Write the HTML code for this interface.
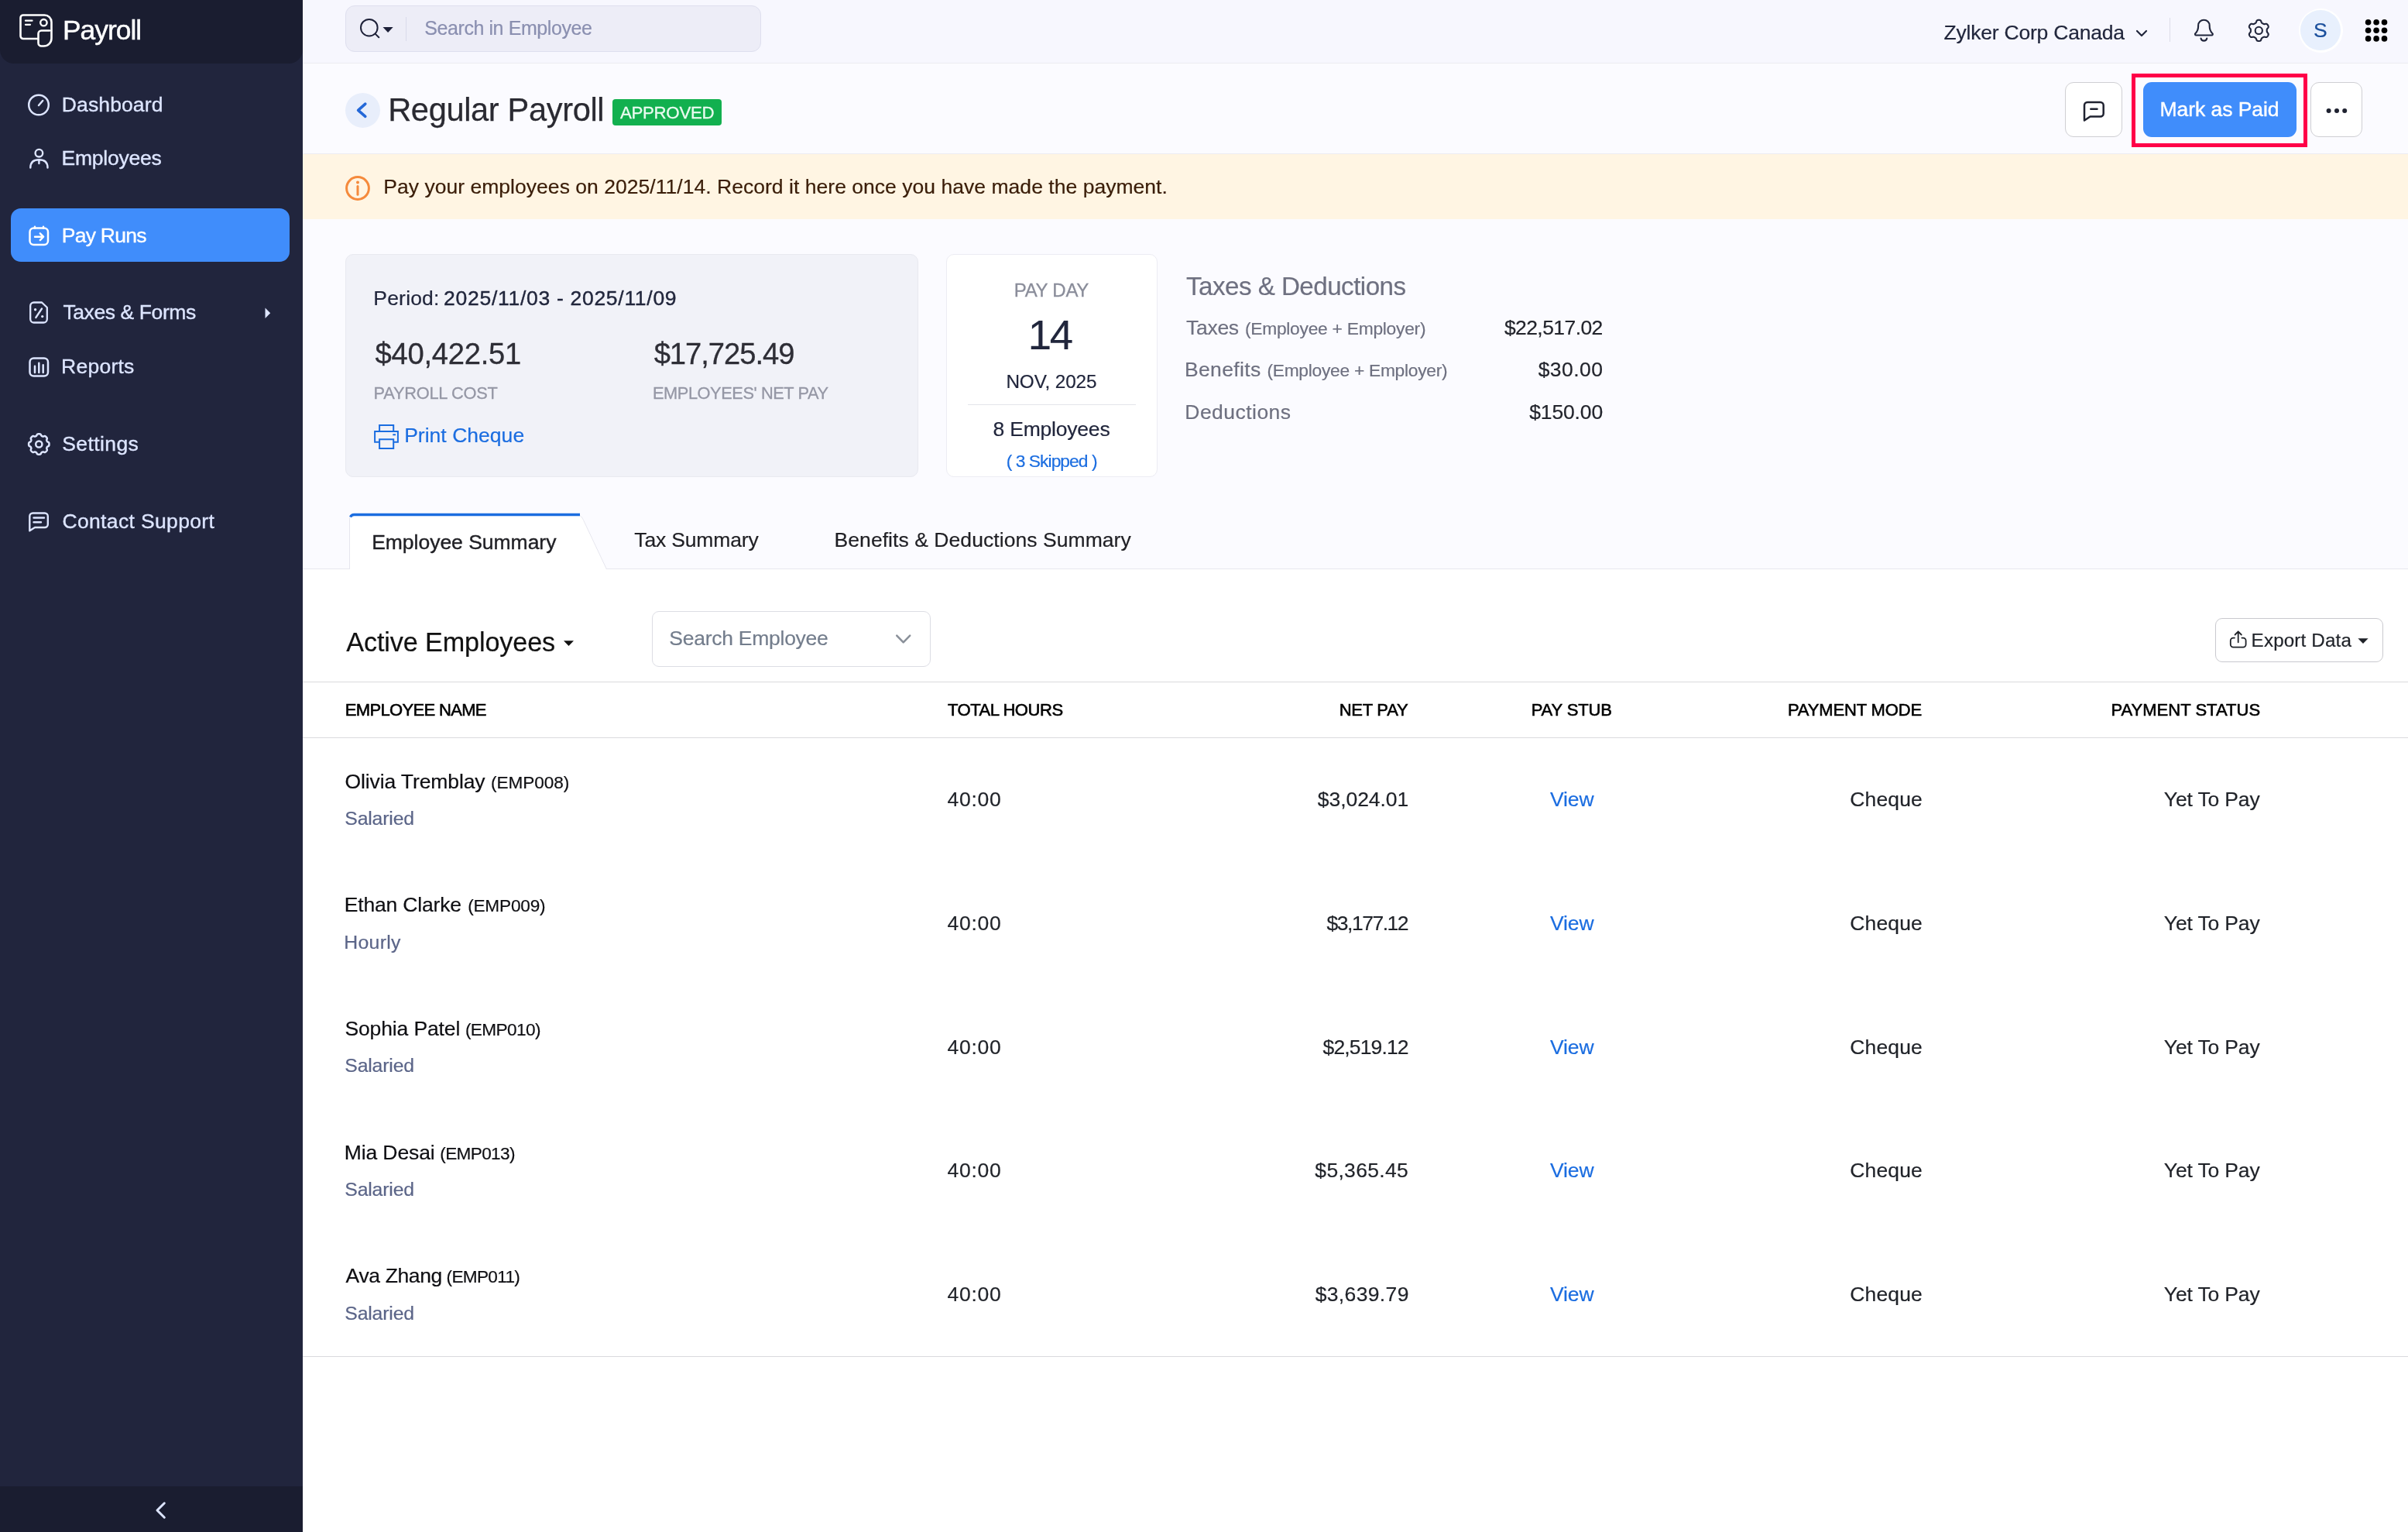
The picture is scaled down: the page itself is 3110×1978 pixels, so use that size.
<!DOCTYPE html>
<html lang="en"><head><meta charset="utf-8"><title>Regular Payroll</title>
<style>
*{box-sizing:border-box;margin:0;padding:0}
html,body{width:3110px;height:1978px;overflow:hidden;background:#fff;font-family:"Liberation Sans", sans-serif;}
.a{position:absolute}
.g{position:absolute;left:0;top:0;width:0;height:0}
.x{position:absolute;left:0;top:0;width:3110px;height:1978px;will-change:transform;pointer-events:none}
.t{position:absolute;line-height:1;white-space:pre;font-weight:400;text-decoration:none}
svg{position:absolute;left:0;top:0;overflow:visible}
@media (max-width:1600px){html{zoom:.5}}
</style></head>
<body>
<aside class="g">
<div class="a" style="left:0px;top:0px;width:391px;height:1978px;background:#21253d"></div>
<div class="a" style="left:0px;top:0px;width:391px;height:82px;background:#1a1d30;border-radius:0 0 18px 18px"></div>
<div class="a" style="left:0px;top:1919px;width:391px;height:59px;background:#1a1d30"></div>
<div class="a" style="left:14px;top:269px;width:360px;height:69px;background:#408dfb;border-radius:13px"></div>
<svg width="3110" height="1978" viewBox="0 0 3110 1978">
<path d="M49.5 50 H30 a3.5 3.5 0 0 1 -3.5 -3.5 V23 a3.5 3.5 0 0 1 3.5 -3.5 H57.5 a9 9 0 0 1 9 9 V49.5 a10 10 0 0 1 -10 10 H53.5 a4 4 0 0 1 -4 -4 V43.5 a4 4 0 0 1 4 -4 H64" fill="none" stroke="#fff" stroke-width="2.6" stroke-linecap="round" stroke-linejoin="round" />
<circle cx="56.4" cy="29.2" r="4.2" fill="none" stroke="#fff" stroke-width="2.4"/>
<path d="M33 26.7 H41.5 M33 31.8 H39" fill="none" stroke="#fff" stroke-width="2.3" stroke-linecap="round" stroke-linejoin="round" />
<circle cx="50" cy="135.5" r="12.8" fill="none" stroke="#dde5ff" stroke-width="2.5"/>
<path d="M50 136 L55.2 130" fill="none" stroke="#dde5ff" stroke-width="2.5" stroke-linecap="round" stroke-linejoin="round" />
<circle cx="50.4" cy="197.7" r="4.8" fill="none" stroke="#dde5ff" stroke-width="2.4"/>
<path d="M39.3 216.5 c0 -7 4 -10.2 11.1 -10.2 s11.1 3.2 11.1 10.2 M50.4 206.5 v4.5" fill="none" stroke="#dde5ff" stroke-width="2.4" stroke-linecap="round" stroke-linejoin="round" />
<rect x="38.5" y="294.5" width="23.5" height="21.5" rx="5" fill="none" stroke="#fff" stroke-width="2.5"/>
<path d="M45 292.6 v2 M56 292.6 v2 M45 305.7 H55.5 M51.8 301.3 l4.3 4.4 l-4.3 4.4" fill="none" stroke="#fff" stroke-width="2.4" stroke-linecap="round" stroke-linejoin="round" />
<path d="M43.7 390.5 H54 l6.8 6.5 V412 a4.5 4.5 0 0 1 -4.5 4.5 H43.7 a4.5 4.5 0 0 1 -4.5 -4.5 V395 a4.5 4.5 0 0 1 4.5 -4.5 z M54 398.5 L46.3 410" fill="none" stroke="#dde5ff" stroke-width="2.3" stroke-linecap="round" stroke-linejoin="round" />
<circle cx="45.6" cy="399.8" r="1.7" fill="#dde5ff"/><circle cx="54.7" cy="408.6" r="1.7" fill="#dde5ff"/>
<path d="M342.5 397.5 L349.2 404.2 L342.5 411 Z" fill="#dde5ff"/>
<rect x="38.5" y="462.5" width="23.5" height="23" rx="5" fill="none" stroke="#dde5ff" stroke-width="2.5"/>
<path d="M45 472.8 V481 M50.3 468.8 V481 M55.7 471.2 V481" fill="none" stroke="#dde5ff" stroke-width="2.5" stroke-linecap="round" stroke-linejoin="round" />
<path d="M50.30 560.30 L50.65 560.31 L50.99 560.32 L51.33 560.36 L51.68 560.41 L52.01 560.50 L52.33 560.66 L52.63 560.93 L52.88 561.36 L53.09 561.86 L53.30 562.31 L53.52 562.63 L53.76 562.85 L54.02 563.01 L54.28 563.14 L54.54 563.25 L54.81 563.36 L55.09 563.45 L55.38 563.52 L55.71 563.54 L56.09 563.47 L56.55 563.29 L57.06 563.09 L57.54 562.97 L57.94 562.98 L58.28 563.10 L58.58 563.27 L58.86 563.48 L59.13 563.70 L59.39 563.93 L59.63 564.17 L59.87 564.41 L60.10 564.67 L60.32 564.94 L60.53 565.22 L60.70 565.52 L60.82 565.86 L60.83 566.26 L60.71 566.74 L60.51 567.25 L60.33 567.71 L60.26 568.09 L60.28 568.42 L60.35 568.71 L60.44 568.99 L60.55 569.26 L60.66 569.52 L60.79 569.78 L60.95 570.04 L61.17 570.28 L61.49 570.50 L61.94 570.71 L62.44 570.92 L62.87 571.17 L63.14 571.47 L63.30 571.79 L63.39 572.12 L63.44 572.47 L63.48 572.81 L63.49 573.15 L63.50 573.50 L63.49 573.85 L63.48 574.19 L63.44 574.53 L63.39 574.88 L63.30 575.21 L63.14 575.53 L62.87 575.83 L62.44 576.08 L61.94 576.29 L61.49 576.50 L61.17 576.72 L60.95 576.96 L60.79 577.22 L60.66 577.48 L60.55 577.74 L60.44 578.01 L60.35 578.29 L60.28 578.58 L60.26 578.91 L60.33 579.29 L60.51 579.75 L60.71 580.26 L60.83 580.74 L60.82 581.14 L60.70 581.48 L60.53 581.78 L60.32 582.06 L60.10 582.33 L59.87 582.59 L59.63 582.83 L59.39 583.07 L59.13 583.30 L58.86 583.52 L58.58 583.73 L58.28 583.90 L57.94 584.02 L57.54 584.03 L57.06 583.91 L56.55 583.71 L56.09 583.53 L55.71 583.46 L55.38 583.48 L55.09 583.55 L54.81 583.64 L54.54 583.75 L54.28 583.86 L54.02 583.99 L53.76 584.15 L53.52 584.37 L53.30 584.69 L53.09 585.14 L52.88 585.64 L52.63 586.07 L52.33 586.34 L52.01 586.50 L51.68 586.59 L51.33 586.64 L50.99 586.68 L50.65 586.69 L50.30 586.70 L49.95 586.69 L49.61 586.68 L49.27 586.64 L48.92 586.59 L48.59 586.50 L48.27 586.34 L47.97 586.07 L47.72 585.64 L47.51 585.14 L47.30 584.69 L47.08 584.37 L46.84 584.15 L46.58 583.99 L46.32 583.86 L46.06 583.75 L45.79 583.64 L45.51 583.55 L45.22 583.48 L44.89 583.46 L44.51 583.53 L44.05 583.71 L43.54 583.91 L43.06 584.03 L42.66 584.02 L42.32 583.90 L42.02 583.73 L41.74 583.52 L41.47 583.30 L41.21 583.07 L40.97 582.83 L40.73 582.59 L40.50 582.33 L40.28 582.06 L40.07 581.78 L39.90 581.48 L39.78 581.14 L39.77 580.74 L39.89 580.26 L40.09 579.75 L40.27 579.29 L40.34 578.91 L40.32 578.58 L40.25 578.29 L40.16 578.01 L40.05 577.74 L39.94 577.48 L39.81 577.22 L39.65 576.96 L39.43 576.72 L39.11 576.50 L38.66 576.29 L38.16 576.08 L37.73 575.83 L37.46 575.53 L37.30 575.21 L37.21 574.88 L37.16 574.53 L37.12 574.19 L37.11 573.85 L37.10 573.50 L37.11 573.15 L37.12 572.81 L37.16 572.47 L37.21 572.12 L37.30 571.79 L37.46 571.47 L37.73 571.17 L38.16 570.92 L38.66 570.71 L39.11 570.50 L39.43 570.28 L39.65 570.04 L39.81 569.78 L39.94 569.52 L40.05 569.26 L40.16 568.99 L40.25 568.71 L40.32 568.42 L40.34 568.09 L40.27 567.71 L40.09 567.25 L39.89 566.74 L39.77 566.26 L39.78 565.86 L39.90 565.52 L40.07 565.22 L40.28 564.94 L40.50 564.67 L40.73 564.41 L40.97 564.17 L41.21 563.93 L41.47 563.70 L41.74 563.48 L42.02 563.27 L42.32 563.10 L42.66 562.98 L43.06 562.97 L43.54 563.09 L44.05 563.29 L44.51 563.47 L44.89 563.54 L45.22 563.52 L45.51 563.45 L45.79 563.36 L46.06 563.25 L46.32 563.14 L46.58 563.01 L46.84 562.85 L47.08 562.63 L47.30 562.31 L47.51 561.86 L47.72 561.36 L47.97 560.93 L48.27 560.66 L48.59 560.50 L48.92 560.41 L49.27 560.36 L49.61 560.32 L49.95 560.31 Z" fill="none" stroke="#dde5ff" stroke-width="2.5" stroke-linejoin="round"/>
<circle cx="50.3" cy="573.5" r="4.1" fill="none" stroke="#dde5ff" stroke-width="2.5"/>
<path d="M42.3 662.5 H57.8 a4 4 0 0 1 4 4 V677 a4 4 0 0 1 -4 4 H45 l-6.7 4.3 V666.5 a4 4 0 0 1 4 -4 z M43.5 668.5 H57 M43.5 674.3 H53" fill="none" stroke="#dde5ff" stroke-width="2.4" stroke-linecap="round" stroke-linejoin="round" />
<path d="M212.3 1940.8 L203 1950 L212.3 1959.2" fill="none" stroke="#dde5ff" stroke-width="3" stroke-linecap="round" stroke-linejoin="round" />
</svg>
<div class="x">
<span class="t" style="left:81.00px;top:22px;font-size:35.4px;color:#ffffff;letter-spacing:-1.0px;-webkit-text-stroke:0.45px #ffffff;">Payroll</span>
<span class="t" style="left:79.85px;top:122px;font-size:26.5px;color:#dde5ff;letter-spacing:0.113px;-webkit-text-stroke:0.35px #dde5ff;">Dashboard</span>
<span class="t" style="left:79.50px;top:191px;font-size:26.5px;color:#dde5ff;letter-spacing:-0.225px;-webkit-text-stroke:0.35px #dde5ff;">Employees</span>
<span class="t" style="left:79.85px;top:291px;font-size:26.5px;color:#ffffff;letter-spacing:-0.757px;-webkit-text-stroke:0.35px #ffffff;">Pay Runs</span>
<span class="t" style="left:81.45px;top:390px;font-size:26.5px;color:#dde5ff;letter-spacing:-0.408px;-webkit-text-stroke:0.35px #dde5ff;">Taxes & Forms</span>
<span class="t" style="left:79.10px;top:460px;font-size:26.5px;color:#dde5ff;letter-spacing:0.233px;-webkit-text-stroke:0.35px #dde5ff;">Reports</span>
<span class="t" style="left:80.30px;top:560px;font-size:26.5px;color:#dde5ff;letter-spacing:0.4px;-webkit-text-stroke:0.35px #dde5ff;">Settings</span>
<span class="t" style="left:80.40px;top:660px;font-size:26.5px;color:#dde5ff;letter-spacing:0.357px;-webkit-text-stroke:0.35px #dde5ff;">Contact Support</span>
</div>
</aside>
<main class="g">
<header class="g">
<div class="a" style="left:391px;top:0px;width:2719px;height:82px;background:#f7f7fe;border-bottom:1px solid #ececf0"></div>
<div class="a" style="left:446px;top:7px;width:537px;height:60px;background:#ededf7;border:1px solid #dedfee;border-radius:12px"></div>
<div class="a" style="left:524px;top:22px;width:1px;height:31px;background:#d9daea"></div>
<div class="a" style="left:2802px;top:23px;width:1px;height:31px;background:#dcdde8"></div>
<div class="a" style="left:2968.5px;top:10.5px;width:57px;height:57px;background:#fff;border-radius:50%"></div>
<div class="a" style="left:2971.2px;top:13.2px;width:51.6px;height:51.6px;background:#e8f0fd;border-radius:50%"></div>
<svg width="3110" height="1978" viewBox="0 0 3110 1978">
<circle cx="476.8" cy="35.7" r="10.8" fill="none" stroke="#1d2038" stroke-width="2"/>
<path d="M484.6 43.6 L489.3 48.3" fill="none" stroke="#1d2038" stroke-width="2" stroke-linecap="round" stroke-linejoin="round" />
<path d="M494.5 35 H507.7 L501.1 42 Z" fill="#1d2038"/>
<path d="M2760 40 L2766 46 L2772 40" fill="none" stroke="#21263c" stroke-width="2.2" stroke-linecap="round" stroke-linejoin="round" />
<path d="M2836.5 45.5 c-1.6 0 -2 -1.4 -1 -2.4 c2.6 -2.8 3.6 -5.2 3.6 -9.1 v-1 a7.3 7.3 0 0 1 14.6 0 v1 c0 3.9 1 6.3 3.6 9.1 c1 1 0.6 2.4 -1 2.4 z M2842.5 49.5 a4 4 0 0 0 7.8 0" fill="none" stroke="#21263c" stroke-width="2.1" stroke-linecap="round" stroke-linejoin="round" />
<path d="M2917.30 25.80 L2917.66 25.81 L2918.01 25.84 L2918.36 25.88 L2918.71 25.96 L2919.05 26.07 L2919.38 26.24 L2919.69 26.48 L2919.97 26.83 L2920.21 27.28 L2920.41 27.81 L2920.58 28.34 L2920.74 28.80 L2920.93 29.16 L2921.13 29.44 L2921.34 29.65 L2921.56 29.82 L2921.80 29.98 L2922.03 30.12 L2922.26 30.26 L2922.50 30.39 L2922.74 30.53 L2922.97 30.66 L2923.21 30.79 L2923.46 30.92 L2923.73 31.03 L2924.02 31.11 L2924.35 31.14 L2924.76 31.12 L2925.24 31.03 L2925.79 30.91 L2926.34 30.82 L2926.85 30.80 L2927.29 30.87 L2927.66 31.01 L2927.97 31.22 L2928.23 31.46 L2928.47 31.72 L2928.69 32.00 L2928.89 32.30 L2929.08 32.60 L2929.25 32.91 L2929.40 33.23 L2929.54 33.56 L2929.65 33.90 L2929.72 34.26 L2929.74 34.62 L2929.68 35.01 L2929.52 35.43 L2929.25 35.86 L2928.89 36.29 L2928.52 36.71 L2928.20 37.08 L2927.98 37.42 L2927.84 37.73 L2927.77 38.02 L2927.73 38.30 L2927.71 38.58 L2927.70 38.85 L2927.70 39.13 L2927.70 39.40 L2927.70 39.67 L2927.70 39.95 L2927.71 40.22 L2927.73 40.50 L2927.77 40.78 L2927.84 41.07 L2927.98 41.38 L2928.20 41.72 L2928.52 42.09 L2928.89 42.51 L2929.25 42.94 L2929.52 43.37 L2929.68 43.79 L2929.74 44.18 L2929.72 44.54 L2929.65 44.90 L2929.54 45.24 L2929.40 45.57 L2929.25 45.89 L2929.08 46.20 L2928.89 46.50 L2928.69 46.80 L2928.47 47.08 L2928.23 47.34 L2927.97 47.58 L2927.66 47.79 L2927.29 47.93 L2926.85 48.00 L2926.34 47.98 L2925.79 47.89 L2925.24 47.77 L2924.76 47.68 L2924.35 47.66 L2924.02 47.69 L2923.73 47.77 L2923.46 47.88 L2923.21 48.01 L2922.97 48.14 L2922.74 48.27 L2922.50 48.41 L2922.26 48.54 L2922.03 48.68 L2921.80 48.82 L2921.56 48.98 L2921.34 49.15 L2921.13 49.36 L2920.93 49.64 L2920.74 50.00 L2920.58 50.46 L2920.41 50.99 L2920.21 51.52 L2919.97 51.97 L2919.69 52.32 L2919.38 52.56 L2919.05 52.73 L2918.71 52.84 L2918.36 52.92 L2918.01 52.96 L2917.66 52.99 L2917.30 53.00 L2916.94 52.99 L2916.59 52.96 L2916.24 52.92 L2915.89 52.84 L2915.55 52.73 L2915.22 52.56 L2914.91 52.32 L2914.63 51.97 L2914.39 51.52 L2914.19 50.99 L2914.02 50.46 L2913.86 50.00 L2913.67 49.64 L2913.47 49.36 L2913.26 49.15 L2913.04 48.98 L2912.80 48.82 L2912.57 48.68 L2912.34 48.54 L2912.10 48.41 L2911.86 48.27 L2911.63 48.14 L2911.39 48.01 L2911.14 47.88 L2910.87 47.77 L2910.58 47.69 L2910.25 47.66 L2909.84 47.68 L2909.36 47.77 L2908.81 47.89 L2908.26 47.98 L2907.75 48.00 L2907.31 47.93 L2906.94 47.79 L2906.63 47.58 L2906.37 47.34 L2906.13 47.08 L2905.91 46.80 L2905.71 46.50 L2905.52 46.20 L2905.35 45.89 L2905.20 45.57 L2905.06 45.24 L2904.95 44.90 L2904.88 44.54 L2904.86 44.18 L2904.92 43.79 L2905.08 43.37 L2905.35 42.94 L2905.71 42.51 L2906.08 42.09 L2906.40 41.72 L2906.62 41.38 L2906.76 41.07 L2906.83 40.78 L2906.87 40.50 L2906.89 40.22 L2906.90 39.95 L2906.90 39.67 L2906.90 39.40 L2906.90 39.13 L2906.90 38.85 L2906.89 38.58 L2906.87 38.30 L2906.83 38.02 L2906.76 37.73 L2906.62 37.42 L2906.40 37.08 L2906.08 36.71 L2905.71 36.29 L2905.35 35.86 L2905.08 35.43 L2904.92 35.01 L2904.86 34.62 L2904.88 34.26 L2904.95 33.90 L2905.06 33.56 L2905.20 33.23 L2905.35 32.91 L2905.52 32.60 L2905.71 32.30 L2905.91 32.00 L2906.13 31.72 L2906.37 31.46 L2906.63 31.22 L2906.94 31.01 L2907.31 30.87 L2907.75 30.80 L2908.26 30.82 L2908.81 30.91 L2909.36 31.03 L2909.84 31.12 L2910.25 31.14 L2910.58 31.11 L2910.87 31.03 L2911.14 30.92 L2911.39 30.79 L2911.63 30.66 L2911.86 30.53 L2912.10 30.39 L2912.34 30.26 L2912.57 30.12 L2912.80 29.98 L2913.04 29.82 L2913.26 29.65 L2913.47 29.44 L2913.67 29.16 L2913.86 28.80 L2914.02 28.34 L2914.19 27.81 L2914.39 27.28 L2914.63 26.83 L2914.91 26.48 L2915.22 26.24 L2915.55 26.07 L2915.89 25.96 L2916.24 25.88 L2916.59 25.84 L2916.94 25.81 Z" fill="none" stroke="#21263c" stroke-width="2.1" stroke-linejoin="round"/>
<circle cx="2917.3" cy="39.4" r="4.6" fill="none" stroke="#21263c" stroke-width="2.1"/>
<circle cx="3058.6" cy="28.7" r="3.8" fill="#000"/>
<circle cx="3058.6" cy="39.2" r="3.8" fill="#000"/>
<circle cx="3058.6" cy="49.9" r="3.8" fill="#000"/>
<circle cx="3069.1" cy="28.7" r="3.8" fill="#000"/>
<circle cx="3069.1" cy="39.2" r="3.8" fill="#000"/>
<circle cx="3069.1" cy="49.9" r="3.8" fill="#000"/>
<circle cx="3079.5" cy="28.7" r="3.8" fill="#000"/>
<circle cx="3079.5" cy="39.2" r="3.8" fill="#000"/>
<circle cx="3079.5" cy="49.9" r="3.8" fill="#000"/>
</svg>
<div class="x">
<span class="t" style="left:548.25px;top:24px;font-size:25px;color:#8a8fb0;letter-spacing:-0.418px;-webkit-text-stroke:0.2px #8a8fb0;">Search in Employee</span>
<span class="t" style="left:2510.45px;top:29px;font-size:26.5px;color:#21263c;letter-spacing:-0.206px;-webkit-text-stroke:0.2px #21263c;">Zylker Corp Canada</span>
<span class="t" style="left:2988.00px;top:26px;font-size:26.5px;color:#1a4f9c;-webkit-text-stroke:0.2px #1a4f9c;">S</span>
</div>
</header>
<section class="g">
<div class="a" style="left:391px;top:82px;width:2719px;height:117px;background:#fbfbff;border-bottom:1px solid #ececf2"></div>
<div class="a" style="left:445.7px;top:119.7px;width:45.3px;height:45.3px;background:#e8eefb;border-radius:50%"></div>
<div class="a" style="left:791px;top:128px;width:141px;height:34px;background:#12b04f;border-radius:4px"></div>
<div class="a" style="left:2667px;top:106px;width:74px;height:71px;background:#fff;border:1px solid #cfcfd3;border-radius:11px"></div>
<div class="a" style="left:2753px;top:95px;width:226.5px;height:94.5px;border:5px solid #ff0048"></div>
<div class="a" style="left:2768px;top:106px;width:198px;height:71px;background:#408dfb;border-radius:11px"></div>
<div class="a" style="left:2984px;top:106px;width:67px;height:71px;background:#fff;border:1px solid #cfcfd3;border-radius:11px"></div>
<svg width="3110" height="1978" viewBox="0 0 3110 1978">
<path d="M471.8 134.2 L462.6 142.3 L471.8 150.4" fill="none" stroke="#2468d8" stroke-width="3.6" stroke-linecap="round" stroke-linejoin="round" />
<path d="M2696 132 H2712.7 a4 4 0 0 1 4 4 V146.5 a4 4 0 0 1 -4 4 H2699.5 l-7.5 5 V136 a4 4 0 0 1 4 -4 z M2700.3 140.8 H2708.5" fill="none" stroke="#1f2230" stroke-width="2.5" stroke-linecap="round" stroke-linejoin="round" />
<circle cx="3007.6" cy="143.1" r="3" fill="#1f2230"/>
<circle cx="3018" cy="143.1" r="3" fill="#1f2230"/>
<circle cx="3028.2" cy="143.1" r="3" fill="#1f2230"/>
</svg>
<div class="x">
<h1 class="t" style="left:501.20px;top:121px;font-size:41.6px;color:#2a2a32;letter-spacing:-0.357px;-webkit-text-stroke:0.25px #2a2a32;">Regular Payroll</h1>
<span class="t" style="left:800.90px;top:135px;font-size:22.3px;color:#eafbf0;letter-spacing:-0.314px;-webkit-text-stroke:0.3px #eafbf0;">APPROVED</span>
<span class="t" style="left:2789.50px;top:128px;font-size:26.5px;color:#ffffff;letter-spacing:-0.055px;-webkit-text-stroke:0.4px #ffffff;">Mark as Paid</span>
</div>
</section>
<div class="g" role="alert">
<div class="a" style="left:391px;top:199px;width:2719px;height:84px;background:#fff5e3"></div>
<svg width="3110" height="1978" viewBox="0 0 3110 1978">
<circle cx="462" cy="243" r="14.4" fill="none" stroke="#f58a3c" stroke-width="3"/>
<circle cx="462" cy="235.4" r="2" fill="#f58a3c"/>
<path d="M462 240.5 V251.3" fill="none" stroke="#f58a3c" stroke-width="3" stroke-linecap="round" stroke-linejoin="round" />
</svg>
<div class="x">
<span class="t" style="left:495.25px;top:228px;font-size:26.5px;color:#3a1d08;letter-spacing:0.032px;-webkit-text-stroke:0.2px #3a1d08;">Pay your employees on 2025/11/14. Record it here once you have made the payment.</span>
</div>
</div>
<section class="g">
<div class="a" style="left:391px;top:283px;width:2719px;height:452px;background:#fbfbff;border-bottom:1px solid #e8e8ee"></div>
<div class="a" style="left:446px;top:328px;width:740px;height:288px;background:#f1f2f8;border:1px solid #e8e9f0;border-radius:10px"></div>
<div class="a" style="left:1222px;top:328px;width:273px;height:288px;background:#fff;border:1px solid #ececf3;border-radius:10px"></div>
<div class="a" style="left:1250px;top:522px;width:217px;height:1px;background:#e3e4ea"></div>
<svg width="3110" height="1978" viewBox="0 0 3110 1978">
<path d="M490.1 557 V549 H508.2 V557 M490.1 570.8 H484.1 V557 H513.9 V570.8 H508.2 M490.1 567.3 H508.2 V579 H490.1 Z M507.3 561.2 H511" fill="none" stroke="#1b6de0" stroke-width="2"/>
</svg>
<div class="x">
<span class="t" style="left:482.35px;top:372px;font-size:26.5px;color:#21263c;letter-spacing:0.183px;-webkit-text-stroke:0.2px #21263c;">Period:</span>
<span class="t" style="left:573.10px;top:372px;font-size:26.5px;color:#21263c;letter-spacing:0.709px;-webkit-text-stroke:0.4px #21263c;">2025/11/03 - 2025/11/09</span>
<span class="t" style="left:484.60px;top:438px;font-size:38.2px;color:#2e2e36;letter-spacing:-0.267px;-webkit-text-stroke:0.3px #2e2e36;">$40,422.51</span>
<span class="t" style="left:844.65px;top:438px;font-size:38.2px;color:#2e2e36;letter-spacing:-1.033px;-webkit-text-stroke:0.3px #2e2e36;">$17,725.49</span>
<span class="t" style="left:482.60px;top:497px;font-size:21.8px;color:#9597a5;letter-spacing:-0.255px;-webkit-text-stroke:0.3px #9597a5;">PAYROLL COST</span>
<span class="t" style="left:842.95px;top:497px;font-size:21.8px;color:#9597a5;letter-spacing:-0.429px;-webkit-text-stroke:0.3px #9597a5;">EMPLOYEES' NET PAY</span>
<a class="t" style="left:522.15px;top:549px;font-size:26.5px;color:#1b6de0;letter-spacing:0.027px;-webkit-text-stroke:0.2px #1b6de0;">Print Cheque</a>
<span class="t" style="left:1309.70px;top:363px;font-size:24.0px;color:#8a8d9a;letter-spacing:-0.267px;-webkit-text-stroke:0.3px #8a8d9a;">PAY DAY</span>
<span class="t" style="left:1327.70px;top:406px;font-size:54.5px;color:#21263c;letter-spacing:-2.2px;-webkit-text-stroke:0.2px #21263c;">14</span>
<span class="t" style="left:1299.45px;top:481px;font-size:24.3px;color:#21263c;letter-spacing:-0.113px;-webkit-text-stroke:0.2px #21263c;">NOV, 2025</span>
<span class="t" style="left:1282.55px;top:541px;font-size:26.5px;color:#21263c;letter-spacing:-0.21px;-webkit-text-stroke:0.2px #21263c;">8 Employees</span>
<a class="t" style="left:1299.70px;top:584px;font-size:22.8px;color:#1b6de0;letter-spacing:-0.95px;-webkit-text-stroke:0.2px #1b6de0;">( 3 Skipped )</a>
<span class="t" style="left:1532.05px;top:353px;font-size:33.2px;color:#6e7080;letter-spacing:-0.547px;-webkit-text-stroke:0.2px #6e7080;">Taxes & Deductions</span>
<span class="t" style="left:1532.10px;top:410px;font-size:26.5px;color:#6e7080;letter-spacing:-0.3px;-webkit-text-stroke:0.2px #6e7080;">Taxes</span>
<span class="t" style="left:1607.90px;top:413px;font-size:22.8px;color:#6e7080;letter-spacing:-0.26px;-webkit-text-stroke:0.2px #6e7080;">(Employee + Employer)</span>
<span class="t" style="left:1942.90px;top:410px;font-size:26.5px;color:#22242c;letter-spacing:-0.578px;-webkit-text-stroke:0.2px #22242c;">$22,517.02</span>
<span class="t" style="left:1529.95px;top:464px;font-size:26.5px;color:#6e7080;letter-spacing:0.357px;-webkit-text-stroke:0.2px #6e7080;">Benefits</span>
<span class="t" style="left:1636.45px;top:467px;font-size:22.8px;color:#6e7080;letter-spacing:-0.285px;-webkit-text-stroke:0.2px #6e7080;">(Employee + Employer)</span>
<span class="t" style="left:1986.70px;top:464px;font-size:26.5px;color:#22242c;letter-spacing:0.44px;-webkit-text-stroke:0.2px #22242c;">$30.00</span>
<span class="t" style="left:1530.30px;top:519px;font-size:26.5px;color:#6e7080;letter-spacing:0.467px;-webkit-text-stroke:0.2px #6e7080;">Deductions</span>
<span class="t" style="left:1975.25px;top:519px;font-size:26.5px;color:#22242c;letter-spacing:-0.15px;-webkit-text-stroke:0.2px #22242c;">$150.00</span>
</div>
</section>
<nav class="g">
<svg width="3110" height="1978" viewBox="0 0 3110 1978">
<path d="M451.5 736 V670 a6 6 0 0 1 6 -6 H742 c6 0 9 2 11.5 7.5 L783.5 736 Z" fill="#ffffff"/>
<path d="M451.5 735 V670 a6 6 0 0 1 6 -6 H742 c6 0 9 2 11.5 7.5 L783.5 735" fill="none" stroke="#e6e6ee" stroke-width="1"/>
<path d="M452.5 667.5 a5.5 5.5 0 0 1 5 -3 H749" fill="none" stroke="#1b6de0" stroke-width="3.3"/>
</svg>
<div class="x">
<span class="t" style="left:480.15px;top:687px;font-size:26.5px;color:#1f1f24;letter-spacing:-0.02px;-webkit-text-stroke:0.4px #1f1f24;">Employee Summary</span>
<span class="t" style="left:819.30px;top:684px;font-size:26.5px;color:#1f1f24;letter-spacing:-0.16px;-webkit-text-stroke:0.2px #1f1f24;">Tax Summary</span>
<span class="t" style="left:1077.55px;top:684px;font-size:26.5px;color:#1f1f24;letter-spacing:0.061px;-webkit-text-stroke:0.2px #1f1f24;">Benefits & Deductions Summary</span>
</div>
</nav>
<section class="g">
<div class="a" style="left:842px;top:789px;width:360px;height:72px;background:#fff;border:1px solid #dcdde4;border-radius:9px"></div>
<div class="a" style="left:2861px;top:798px;width:217px;height:57px;background:#fff;border:1px solid #c9c9ce;border-radius:9px"></div>
<svg width="3110" height="1978" viewBox="0 0 3110 1978">
<path d="M728 827.3 H741 L734.5 834 Z" fill="#111"/>
<path d="M1158.2 820.6 L1166.7 829.4 L1175.2 820.6" fill="none" stroke="#8a9099" stroke-width="2.5" stroke-linecap="round" stroke-linejoin="round" />
<path d="M2886 823.6 h-1.7 a3.5 3.5 0 0 0 -3.5 3.5 v5 a3.5 3.5 0 0 0 3.5 3.5 h12.8 a3.5 3.5 0 0 0 3.5 -3.5 v-5 a3.5 3.5 0 0 0 -3.5 -3.5 h-1.7 M2890.7 829.3 V816 M2886.6 819.5 L2890.7 815.3 L2894.8 819.5" fill="none" stroke="#1f2228" stroke-width="1.8" stroke-linecap="round" stroke-linejoin="round" />
<path d="M3045.4 824.2 H3058.6 L3052 831 Z" fill="#1f2228"/>
</svg>
<div class="x">
<span class="t" style="left:447.35px;top:812px;font-size:34.2px;color:#111111;letter-spacing:-0.127px;-webkit-text-stroke:0.2px #111111;">Active Employees</span>
<span class="t" style="left:864.35px;top:811px;font-size:26.5px;color:#737d8c;letter-spacing:-0.264px;-webkit-text-stroke:0.2px #737d8c;">Search Employee</span>
<span class="t" style="left:2907.60px;top:815px;font-size:24.2px;color:#1f2228;letter-spacing:0.16px;-webkit-text-stroke:0.2px #1f2228;">Export Data</span>
</div>
</section>
<div class="g" role="table">
<div class="a" style="left:391px;top:880px;width:2719px;height:1px;background:#dadadd"></div>
<div class="a" style="left:391px;top:952px;width:2719px;height:1px;background:#dadadd"></div>
<div class="a" style="left:391px;top:1751px;width:2719px;height:1px;background:#dadadd"></div>
<div class="x">
<div role="row">
<span class="t" role="columnheader" style="left:445.85px;top:906px;font-size:22.0px;color:#000000;letter-spacing:-0.675px;-webkit-text-stroke:0.6px #000000;">EMPLOYEE NAME</span>
<span class="t" role="columnheader" style="left:1223.95px;top:906px;font-size:22.0px;color:#000000;letter-spacing:-0.45px;-webkit-text-stroke:0.6px #000000;">TOTAL HOURS</span>
<span class="t" role="columnheader" style="left:1729.65px;top:906px;font-size:22.0px;color:#000000;letter-spacing:-0.25px;-webkit-text-stroke:0.6px #000000;">NET PAY</span>
<span class="t" role="columnheader" style="left:1977.70px;top:906px;font-size:22.0px;color:#000000;letter-spacing:-0.114px;-webkit-text-stroke:0.6px #000000;">PAY STUB</span>
<span class="t" role="columnheader" style="left:2308.90px;top:906px;font-size:22.0px;color:#000000;letter-spacing:-0.145px;-webkit-text-stroke:0.6px #000000;">PAYMENT MODE</span>
<span class="t" role="columnheader" style="left:2726.45px;top:906px;font-size:22.0px;color:#000000;letter-spacing:0.023px;-webkit-text-stroke:0.6px #000000;">PAYMENT STATUS</span>
</div>
<div role="row">
<span class="t" role="cell" style="left:445.40px;top:996px;font-size:26.5px;color:#0e0e12;letter-spacing:-0.1px;-webkit-text-stroke:0.2px #0e0e12;">Olivia Tremblay</span>
<span class="t" role="cell" style="left:634.00px;top:1000px;font-size:22.6px;color:#0e0e12;letter-spacing:-0.057px;-webkit-text-stroke:0.2px #0e0e12;">(EMP008)</span>
<span class="t" role="cell" style="left:445.25px;top:1045px;font-size:24.8px;color:#5b6588;letter-spacing:-0.157px;-webkit-text-stroke:0.2px #5b6588;">Salaried</span>
<span class="t" role="cell" style="left:1223.60px;top:1019px;font-size:26.5px;color:#1f2228;letter-spacing:0.7px;-webkit-text-stroke:0.2px #1f2228;">40:00</span>
<span class="t" role="cell" style="left:1701.80px;top:1019px;font-size:26.5px;color:#1f2228;letter-spacing:-0.05px;-webkit-text-stroke:0.2px #1f2228;">$3,024.01</span>
<a class="t" role="cell" style="left:2001.95px;top:1019px;font-size:26.5px;color:#1b6de0;letter-spacing:-0.1px;-webkit-text-stroke:0.2px #1b6de0;">View</a>
<span class="t" role="cell" style="left:2389.25px;top:1019px;font-size:26.5px;color:#1f2228;letter-spacing:0.14px;-webkit-text-stroke:0.2px #1f2228;">Cheque</span>
<span class="t" role="cell" style="left:2794.80px;top:1019px;font-size:26.5px;color:#1f2228;letter-spacing:-0.156px;-webkit-text-stroke:0.2px #1f2228;">Yet To Pay</span>
</div>
<div role="row">
<span class="t" role="cell" style="left:444.70px;top:1155px;font-size:26.5px;color:#0e0e12;letter-spacing:-0.164px;-webkit-text-stroke:0.2px #0e0e12;">Ethan Clarke</span>
<span class="t" role="cell" style="left:604.15px;top:1159px;font-size:22.6px;color:#0e0e12;letter-spacing:-0.186px;-webkit-text-stroke:0.2px #0e0e12;">(EMP009)</span>
<span class="t" role="cell" style="left:444.15px;top:1205px;font-size:24.8px;color:#5b6588;letter-spacing:0.34px;-webkit-text-stroke:0.2px #5b6588;">Hourly</span>
<span class="t" role="cell" style="left:1223.60px;top:1179px;font-size:26.5px;color:#1f2228;letter-spacing:0.7px;-webkit-text-stroke:0.2px #1f2228;">40:00</span>
<span class="t" role="cell" style="left:1713.60px;top:1179px;font-size:26.5px;color:#1f2228;letter-spacing:-1.5px;-webkit-text-stroke:0.2px #1f2228;">$3,177.12</span>
<a class="t" role="cell" style="left:2001.95px;top:1179px;font-size:26.5px;color:#1b6de0;letter-spacing:-0.1px;-webkit-text-stroke:0.2px #1b6de0;">View</a>
<span class="t" role="cell" style="left:2389.25px;top:1179px;font-size:26.5px;color:#1f2228;letter-spacing:0.14px;-webkit-text-stroke:0.2px #1f2228;">Cheque</span>
<span class="t" role="cell" style="left:2794.80px;top:1179px;font-size:26.5px;color:#1f2228;letter-spacing:-0.156px;-webkit-text-stroke:0.2px #1f2228;">Yet To Pay</span>
</div>
<div role="row">
<span class="t" role="cell" style="left:445.40px;top:1315px;font-size:26.5px;color:#0e0e12;letter-spacing:-0.127px;-webkit-text-stroke:0.2px #0e0e12;">Sophia Patel</span>
<span class="t" role="cell" style="left:600.90px;top:1319px;font-size:22.6px;color:#0e0e12;letter-spacing:-0.571px;-webkit-text-stroke:0.2px #0e0e12;">(EMP010)</span>
<span class="t" role="cell" style="left:445.25px;top:1364px;font-size:24.8px;color:#5b6588;letter-spacing:-0.157px;-webkit-text-stroke:0.2px #5b6588;">Salaried</span>
<span class="t" role="cell" style="left:1223.60px;top:1339px;font-size:26.5px;color:#1f2228;letter-spacing:0.7px;-webkit-text-stroke:0.2px #1f2228;">40:00</span>
<span class="t" role="cell" style="left:1708.55px;top:1339px;font-size:26.5px;color:#1f2228;letter-spacing:-0.863px;-webkit-text-stroke:0.2px #1f2228;">$2,519.12</span>
<a class="t" role="cell" style="left:2001.95px;top:1339px;font-size:26.5px;color:#1b6de0;letter-spacing:-0.1px;-webkit-text-stroke:0.2px #1b6de0;">View</a>
<span class="t" role="cell" style="left:2389.25px;top:1339px;font-size:26.5px;color:#1f2228;letter-spacing:0.14px;-webkit-text-stroke:0.2px #1f2228;">Cheque</span>
<span class="t" role="cell" style="left:2794.80px;top:1339px;font-size:26.5px;color:#1f2228;letter-spacing:-0.156px;-webkit-text-stroke:0.2px #1f2228;">Yet To Pay</span>
</div>
<div role="row">
<span class="t" role="cell" style="left:444.70px;top:1475px;font-size:26.5px;color:#0e0e12;letter-spacing:-0.1px;-webkit-text-stroke:0.2px #0e0e12;">Mia Desai</span>
<span class="t" role="cell" style="left:568.25px;top:1479px;font-size:22.6px;color:#0e0e12;letter-spacing:-0.643px;-webkit-text-stroke:0.2px #0e0e12;">(EMP013)</span>
<span class="t" role="cell" style="left:445.25px;top:1524px;font-size:24.8px;color:#5b6588;letter-spacing:-0.157px;-webkit-text-stroke:0.2px #5b6588;">Salaried</span>
<span class="t" role="cell" style="left:1223.60px;top:1498px;font-size:26.5px;color:#1f2228;letter-spacing:0.7px;-webkit-text-stroke:0.2px #1f2228;">40:00</span>
<span class="t" role="cell" style="left:1698.35px;top:1498px;font-size:26.5px;color:#1f2228;letter-spacing:0.312px;-webkit-text-stroke:0.2px #1f2228;">$5,365.45</span>
<a class="t" role="cell" style="left:2001.95px;top:1498px;font-size:26.5px;color:#1b6de0;letter-spacing:-0.1px;-webkit-text-stroke:0.2px #1b6de0;">View</a>
<span class="t" role="cell" style="left:2389.25px;top:1498px;font-size:26.5px;color:#1f2228;letter-spacing:0.14px;-webkit-text-stroke:0.2px #1f2228;">Cheque</span>
<span class="t" role="cell" style="left:2794.80px;top:1498px;font-size:26.5px;color:#1f2228;letter-spacing:-0.156px;-webkit-text-stroke:0.2px #1f2228;">Yet To Pay</span>
</div>
<div role="row">
<span class="t" role="cell" style="left:446.60px;top:1634px;font-size:26.5px;color:#0e0e12;letter-spacing:-0.375px;-webkit-text-stroke:0.2px #0e0e12;">Ava Zhang</span>
<span class="t" role="cell" style="left:576.60px;top:1638px;font-size:22.6px;color:#0e0e12;letter-spacing:-0.686px;-webkit-text-stroke:0.2px #0e0e12;">(EMP011)</span>
<span class="t" role="cell" style="left:445.25px;top:1684px;font-size:24.8px;color:#5b6588;letter-spacing:-0.157px;-webkit-text-stroke:0.2px #5b6588;">Salaried</span>
<span class="t" role="cell" style="left:1223.60px;top:1658px;font-size:26.5px;color:#1f2228;letter-spacing:0.7px;-webkit-text-stroke:0.2px #1f2228;">40:00</span>
<span class="t" role="cell" style="left:1698.70px;top:1658px;font-size:26.5px;color:#1f2228;letter-spacing:0.35px;-webkit-text-stroke:0.2px #1f2228;">$3,639.79</span>
<a class="t" role="cell" style="left:2001.95px;top:1658px;font-size:26.5px;color:#1b6de0;letter-spacing:-0.1px;-webkit-text-stroke:0.2px #1b6de0;">View</a>
<span class="t" role="cell" style="left:2389.25px;top:1658px;font-size:26.5px;color:#1f2228;letter-spacing:0.14px;-webkit-text-stroke:0.2px #1f2228;">Cheque</span>
<span class="t" role="cell" style="left:2794.80px;top:1658px;font-size:26.5px;color:#1f2228;letter-spacing:-0.156px;-webkit-text-stroke:0.2px #1f2228;">Yet To Pay</span>
</div>
</div>
</div>
</main>
</body></html>
